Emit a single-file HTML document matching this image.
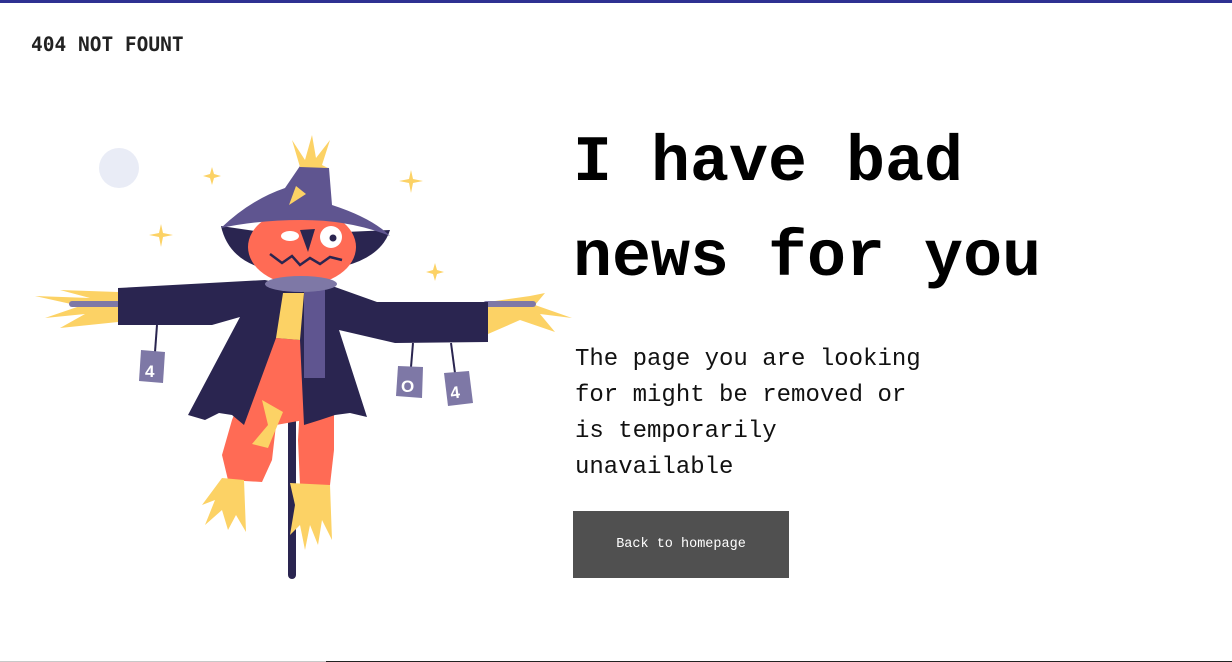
<!DOCTYPE html>
<html><head><meta charset="utf-8"><style>
html,body{margin:0;padding:0;background:#fff;width:1232px;height:662px;overflow:hidden;position:relative}
.top{position:absolute;left:0;top:0;width:1232px;height:3px;background:#2e3192}
.brand{position:absolute;left:31px;top:33px;font:bold 19.5px "DejaVu Sans Mono","Liberation Mono",monospace;color:#222}
h1{position:absolute;left:573px;top:116px;margin:0;font:bold 65px/95px "Liberation Mono",monospace;color:#000;white-space:nowrap}
p{position:absolute;left:575px;top:342px;margin:0;font:24px/36px "Liberation Mono",monospace;color:#111;width:355px}
.btn{position:absolute;left:573px;top:511px;width:216px;height:67px;background:#505050;color:#fff;font:13.5px/67px "Liberation Mono",monospace;text-align:center}
.b1{position:absolute;left:0;top:661px;width:326px;height:1px;background:#c8c8c8}
.b2{position:absolute;left:326px;top:661px;width:906px;height:1px;background:#222}
svg{position:absolute;left:0;top:0}
</style></head><body>
<div class="top"></div>
<div class="brand">404 NOT FOUNT</div>
<svg width="600" height="600" viewBox="0 0 600 600">
<circle cx="119" cy="168" r="20" fill="#e9ecf6"/>
<g fill="#fcd265">
<path d="M212,167 L214,174 L221,176 L214,178 L212,185 L210,178 L203,176 L210,174Z"/>
<path d="M411,170 L413,179 L423,181 L413,183 L411,193 L409,183 L399,181 L409,179Z"/>
<path d="M161,224 L163,233 L173,235 L163,237 L161,247 L159,237 L149,235 L159,233Z"/>
<path d="M435,263 L437,270 L444,272 L437,274 L435,281 L433,274 L426,272 L433,270Z"/>
</g>
<g fill="#fcd265">
<path d="M118,292 L60,290 L90,298 L35,296 L80,306 L45,318 L85,314 L60,328 L118,322Z"/>
<path d="M488,302 L530,296 L545,293 L535,305 L572,318 L540,314 L555,332 L520,320 L488,334Z"/>
</g>
<line x1="72" y1="304" x2="120" y2="304" stroke="#7e78a6" stroke-width="6" stroke-linecap="round"/>
<line x1="486" y1="304" x2="533" y2="304" stroke="#7e78a6" stroke-width="6" stroke-linecap="round"/>
<g stroke="#2a2550" stroke-width="2"><line x1="157" y1="325" x2="155" y2="352"/><line x1="413" y1="343" x2="411" y2="367"/><line x1="451" y1="343" x2="455" y2="373"/></g>
<g fill="#7e78a6">
<path d="M141,350 L165,352 L163,383 L139,381Z"/>
<path d="M398,366 L423,367 L422,398 L396,396Z"/>
<path d="M444,373 L469,371 L473,403 L448,406Z"/>
</g>
<g fill="#fff" font-family="Liberation Sans,sans-serif" font-weight="bold" font-size="17">
<text x="145" y="377">4</text><text x="401" y="392">O</text><text x="450" y="398" transform="rotate(-8 457 390)">4</text>
</g>
<line x1="292" y1="392" x2="292" y2="575" stroke="#2a2550" stroke-width="8" stroke-linecap="round"/>
<g fill="#ff6b55">
<path d="M265,337 L306,337 L304,420 L276,425 L272,460 L262,482 L228,480 L222,455 L232,420Z"/>
<path d="M300,405 L334,405 L334,450 L330,485 L300,485 L298,440Z"/>
</g>
<path d="M262,400 L283,412 L268,448 L252,444 L268,425Z" fill="#fcd265"/>
<g fill="#fcd265">
<path d="M222,478 L244,480 L246,532 L236,515 L228,530 L222,510 L205,525 L215,500 L202,505Z"/>
<path d="M290,483 L330,485 L332,540 L322,520 L318,545 L310,525 L305,550 L300,525 L290,535 L295,505Z"/>
</g>
<path fill="#2a2550" d="M118,288 L265,280 L300,288 L335,287 L377,302 L488,302 L488,342 L395,343 L339,330 L367,417 L350,413 L335,415 L320,420 L304,425 L300,340 L276,338 L244,425 L232,415 L219,413 L205,420 L188,415 L240,317 L212,325 L118,325Z"/>
<path d="M283,293 L304,293 L300,340 L276,338Z" fill="#fcd265"/>
<path fill="#2a2550" d="M221,226 Q228,258 262,268 L262,232 Z"/>
<path fill="#2a2550" d="M390,230 Q382,256 345,266 L345,232 Z"/>
<ellipse cx="302" cy="247" rx="54" ry="38" fill="#ff6b55"/>
<path d="M304,290 L325,290 L325,378 L304,378Z" fill="#5f5590"/>
<ellipse cx="301" cy="284" rx="36" ry="8" fill="#7e78a6"/>
<path fill="#5f5590" d="M221,228 Q250,200 285,188 L300,166 L329,168 L332,205 Q372,218 390,236 Q350,220 302,220 Q258,220 221,228 Z"/>
<path d="M289,205 L296,186 L306,194 Z" fill="#fcd265"/>
<g fill="#fcd265"><path d="M300,167 L292,140 L305,160 L312,135 L316,158 L330,140 L322,165 L328,168Z"/></g>
<ellipse cx="290" cy="236" rx="9" ry="5" fill="#fff"/>
<circle cx="331" cy="237" r="11" fill="#fff"/>
<circle cx="333" cy="238" r="3.5" fill="#2a2550"/>
<path d="M300,230 L315,229 L308,252Z" fill="#2a2550"/>
<path d="M270,254 L282,263 L292,256 L300,265 L310,258 L320,264 L330,257 L342,260" fill="none" stroke="#2a2550" stroke-width="2.5"/>
</svg>
<h1>I have bad<br>news for you</h1>
<p>The page you are looking for might be removed or is temporarily unavailable</p>
<div class="btn">Back to homepage</div>
<div class="b1"></div><div class="b2"></div>
</body></html>
